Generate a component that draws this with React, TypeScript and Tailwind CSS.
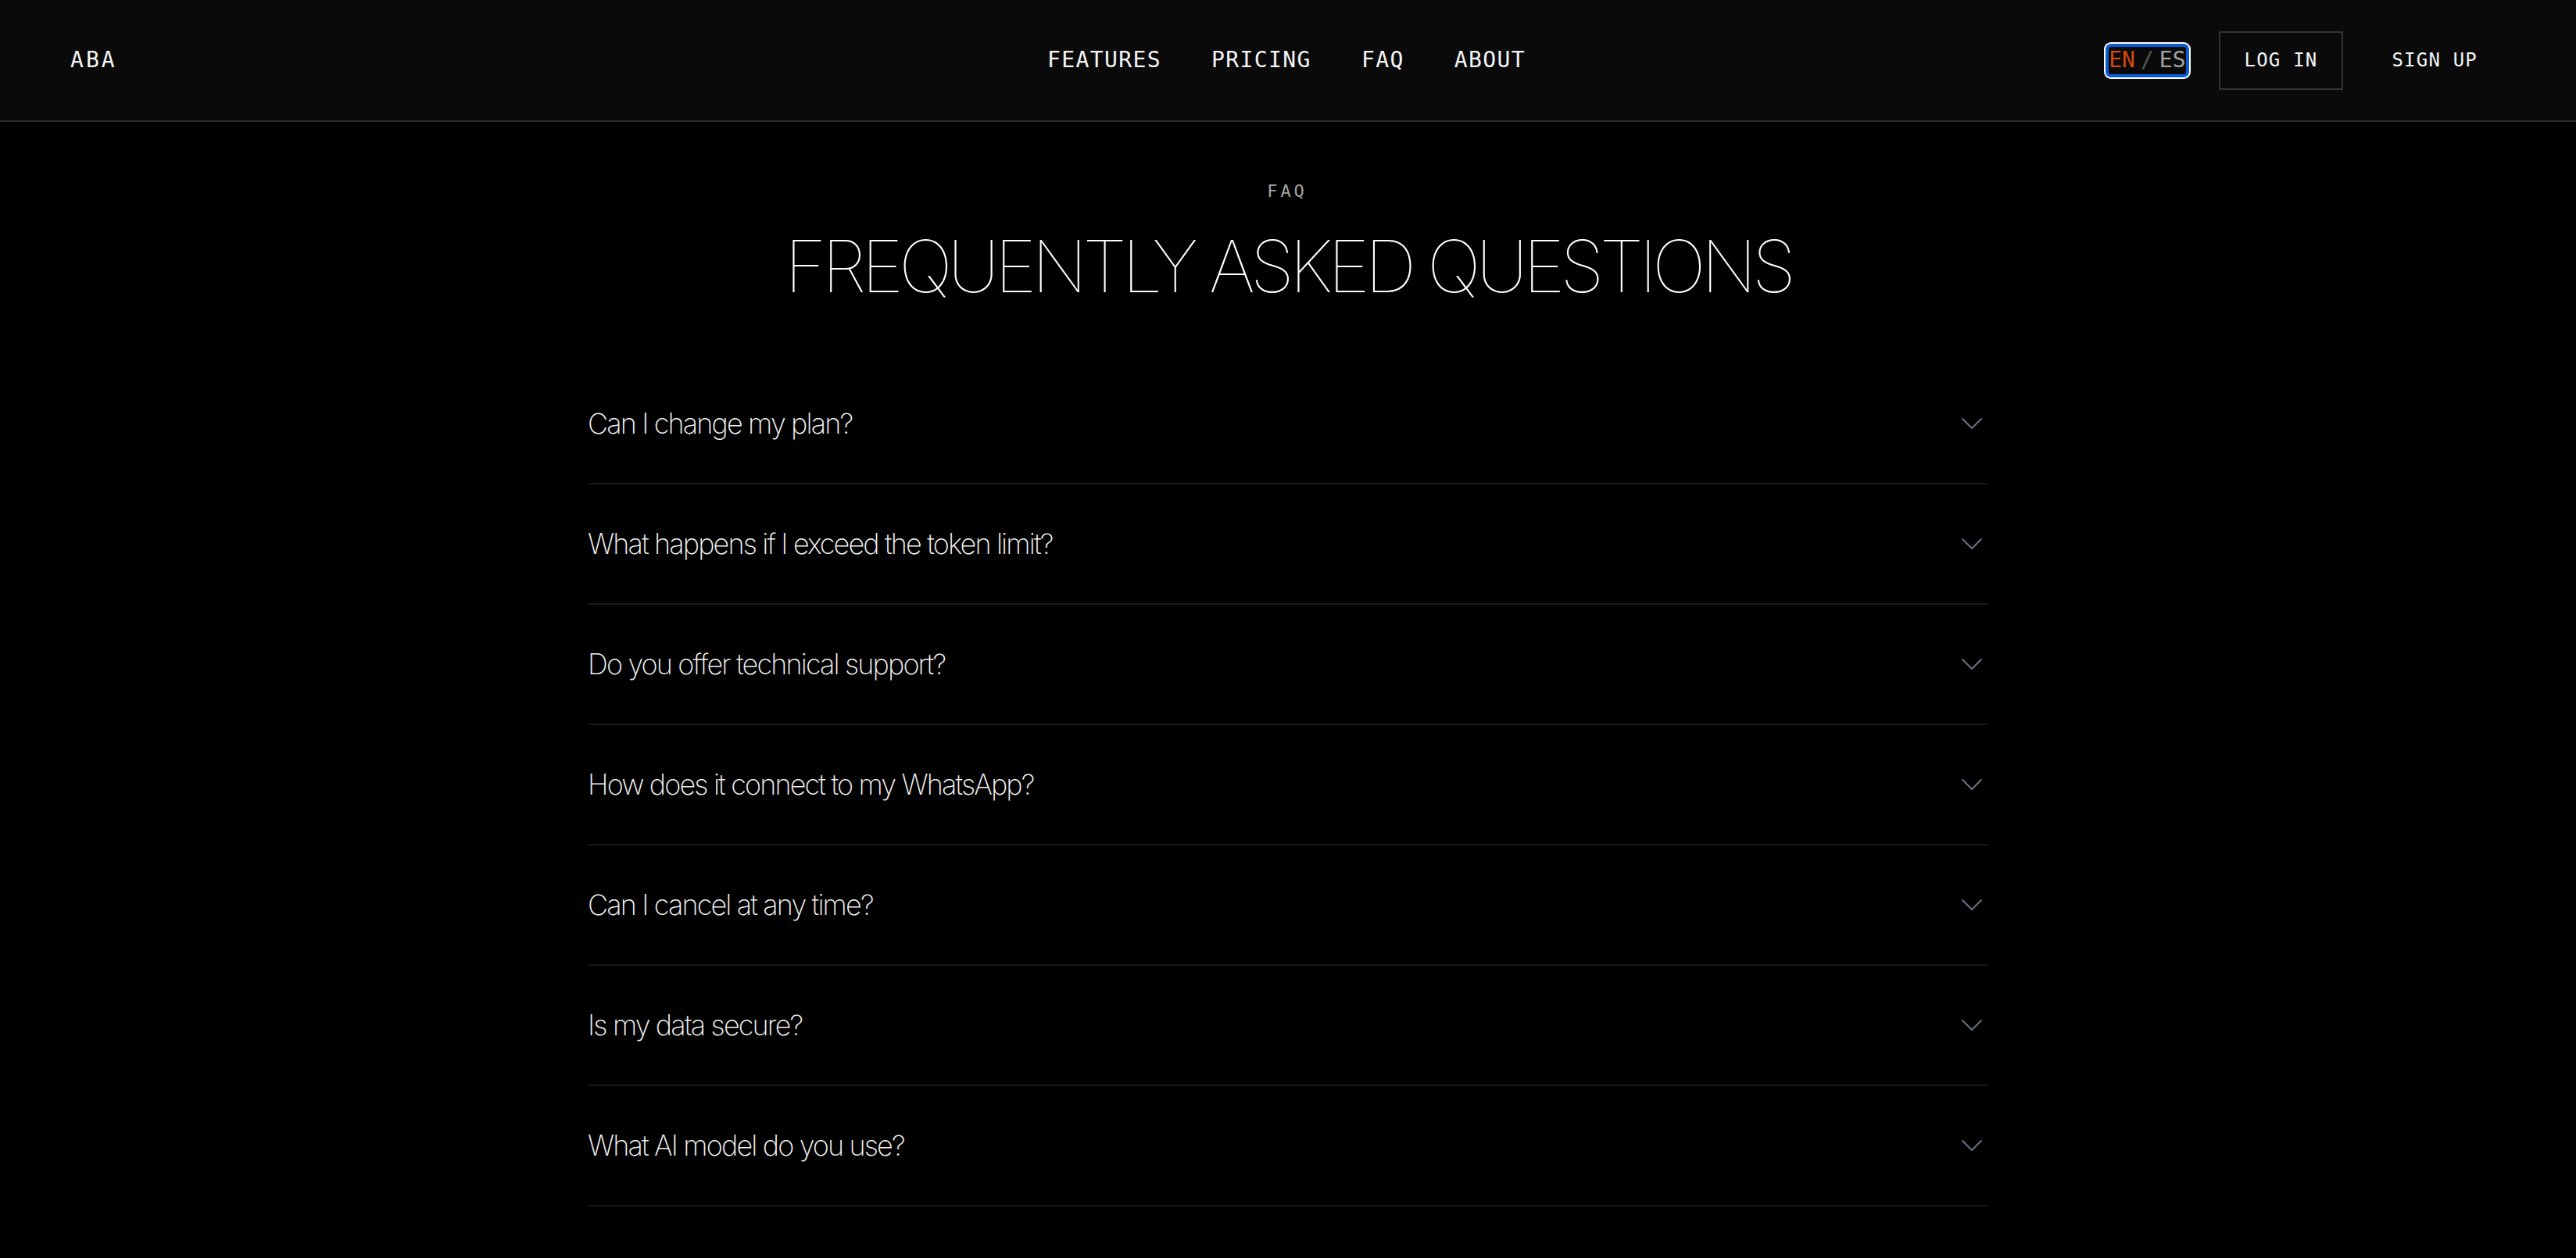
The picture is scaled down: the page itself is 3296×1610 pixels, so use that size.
import React from "react";

const questions = [
  "Can I change my plan?",
  "What happens if I exceed the token limit?",
  "Do you offer technical support?",
  "How does it connect to my WhatsApp?",
  "Can I cancel at any time?",
  "Is my data secure?",
  "What AI model do you use?",
];

const mono = { fontFamily: '"DejaVu Sans Mono", "Liberation Mono", monospace' };
const inter = { fontFamily: 'Inter, "Noto Sans", sans-serif' };

function Chevron() {
  return (
    <svg width="28" height="16" viewBox="0 0 28 16" fill="none" className="mr-[7px] shrink-0">
      <path d="M2 2 L14 14 L26 2" stroke="#6b7280" strokeWidth="2" strokeLinecap="round" strokeLinejoin="round" />
    </svg>
  );
}

export default function App() {
  return (
    <div className="min-h-screen bg-black text-white" style={inter}>
      <header className="grid h-[156px] grid-cols-[1fr_auto_1fr] items-center border-b-2 border-[#2b2b2b] bg-[#0a0a0a] pl-[90px] pr-[94px]">
        <div className="text-[28px] tracking-[0.11em] text-[#f5f5f5]" style={mono}>
          ABA
        </div>
        <nav className="flex items-center gap-[64px] text-[28px] tracking-[0.05em] text-[#f5f5f5]" style={mono}>
          <a>FEATURES</a>
          <a>PRICING</a>
          <a>FAQ</a>
          <a>ABOUT</a>
        </nav>
        <div className="flex items-center justify-end" style={mono}>
          <div className="mr-[36px] rounded-[9px] bg-white p-[2px]">
            <div className="flex h-[43px] items-center rounded-[7px] border-[4px] border-[#0b5bd3] bg-[#0a0a0a] text-[28px]">
              <span className="text-[#d4490c]">EN</span>
              <span className="mx-[7px] text-[#555555]">/</span>
              <span className="text-[#a3a3a3]">ES</span>
            </div>
          </div>
          <button className="flex h-[75px] items-center border-2 border-[#333333] px-[31px] text-[24px] tracking-[0.05em] text-[#f5f5f5]">
            LOG IN
          </button>
          <button className="ml-[30px] flex h-[75px] items-center px-[32px] text-[24px] tracking-[0.05em] text-[#f5f5f5]">
            SIGN UP
          </button>
        </div>
      </header>

      <main className="flex flex-col items-center pt-[73px]">
        <div className="h-[32px] text-[22px] leading-[32px] tracking-[0.18em] text-[#a3a3a3]" style={mono}>
          <span className="mr-[2px]">FAQ</span>
        </div>
        <h1 className="mt-[34px] text-[92px] font-thin leading-none tracking-[-0.066em] text-white">
          FREQUENTLY ASKED QUESTIONS
        </h1>
        <div className="mt-[79px] w-[1792px]">
          {questions.map((q) => (
            <div
              key={q}
              className="flex items-center justify-between border-b-2 border-[#18181b] py-[48px]"
            >
              <span className="text-[36px] font-[150] leading-[56px] tracking-[-0.052em] text-[#f2f2f2]">
                {q}
              </span>
              <Chevron />
            </div>
          ))}
        </div>
      </main>
    </div>
  );
}
